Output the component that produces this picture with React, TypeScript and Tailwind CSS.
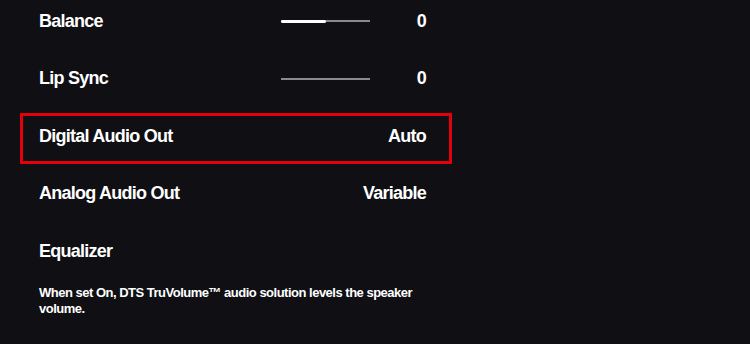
const rows = [
  { label: "Balance", value: "0", slider: 51 },
  { label: "Lip Sync", value: "0", slider: 0 },
  { label: "Digital Audio Out", value: "Auto", selected: true },
  { label: "Analog Audio Out", value: "Variable" },
  { label: "Equalizer" },
];

function Slider({ fill }: { fill: number }) {
  return (
    <div className="relative h-[3px] w-[89px] flex items-center">
      <div className="h-[2px] w-full bg-[#8a8a8e]" />
      <div
        className="absolute left-0 top-0 h-[3px] bg-white rounded-full"
        style={{ width: `${fill}%` }}
      />
    </div>
  );
}

export default function App() {
  return (
    <div
      className="w-[750px] h-[344px] overflow-hidden bg-[#0f0f14] text-white"
      style={{ fontFamily: '"Liberation Sans", Arial, sans-serif' }}
    >
      <div className="w-[432px] ml-[20px] -mt-[2px] flex flex-col gap-[6.5px]">
        {rows.map((r) => (
          <div
            key={r.label}
            className={`h-[51px] pl-[16px] pr-[23px] pb-[5px] flex items-center border-[3px] ${
              r.selected ? "border-[#e3000b]" : "border-transparent"
            }`}
          >
            <span className="text-[18px] font-bold tracking-[-0.75px]">{r.label}</span>
            <div className="flex-1" />
            {r.slider !== undefined && (
              <div className="mr-[47px]">
                <Slider fill={r.slider} />
              </div>
            )}
            {r.value && (
              <span className="text-[18px] font-bold tracking-[-0.75px]">{r.value}</span>
            )}
          </div>
        ))}
      </div>
      <p className="ml-[39px] mt-[6px] w-[385px] text-[13px] leading-[16px] font-bold tracking-[-0.5px]">
        When set On, DTS TruVolume™ audio solution levels the speaker volume.
      </p>
    </div>
  );
}
